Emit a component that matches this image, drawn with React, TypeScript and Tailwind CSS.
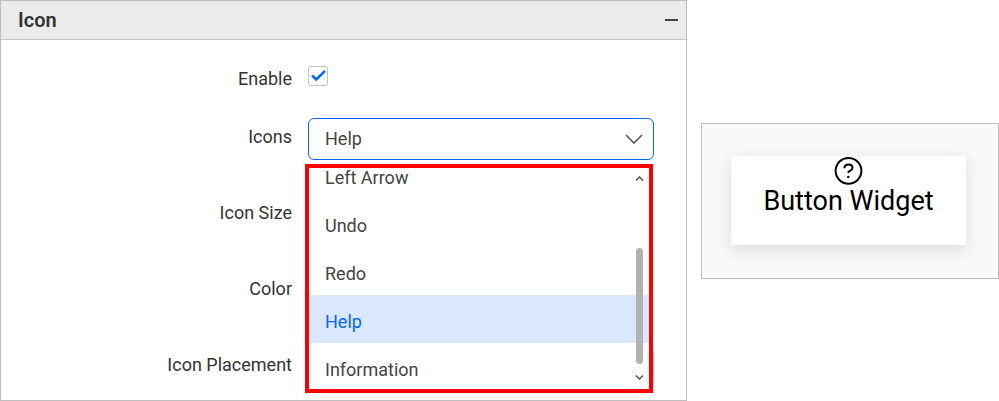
import React from "react";

const icons = ["Left Arrow", "Undo", "Redo", "Help", "Information"];

function Row({ label, id, children }: { label: string; id: string; children?: React.ReactNode }) {
  return (
    <div className="flex h-[42px] items-start gap-4">
      <label htmlFor={id} className="w-[291px] shrink-0 text-right leading-[38px]">
        {label}
      </label>
      <div className="relative min-w-0 flex-1">{children}</div>
    </div>
  );
}

function Chevron({ className, d }: { className: string; d: string }) {
  return (
    <svg viewBox="0 0 18 10" className={className} fill="none" stroke="currentColor" aria-hidden="true">
      <path d={d} />
    </svg>
  );
}

function IconMenu() {
  return (
    <div className="absolute -left-[3px] right-px top-[46px] z-10 h-[229px] overflow-hidden border-4 border-[#ff0000] bg-white">
      <ul role="listbox" aria-label="Icons" className="-mt-[17px] text-[#444444]">
        {icons.map((name) => (
          <li
            key={name}
            role="option"
            aria-selected={name === "Help"}
            className={
              name === "Help"
                ? "h-12 bg-[#dae8fe] px-4 leading-[54px] text-[#0565ff]"
                : "h-12 px-4 leading-[54px]"
            }
          >
            {name}
          </li>
        ))}
      </ul>
      <div className="absolute bottom-0 right-[5px] top-0 flex w-[9px] flex-col items-center justify-between pb-[9px] pt-2 text-[#555555]">
        <Chevron className="h-[5px] w-[9px] stroke-[3]" d="M2 9 9 2l7 7" />
        <div className="mb-[11px] mt-auto h-[116px] w-[7px] shrink-0 rounded-full bg-[#b2b2b2]" />
        <Chevron className="h-[5px] w-[9px] stroke-[3]" d="m2 1 7 7 7-7" />
      </div>
    </div>
  );
}

function IconPanel() {
  return (
    <section className="min-w-0 flex-1 border border-[#bebebe] bg-white pb-3 text-[18px] text-[#333333]">
      <header className="flex h-[39px] items-center justify-between border-b border-[#c4c4c4] bg-[#ebebeb] pl-[17px] pr-[7px]">
        <h2 className="text-[20px] font-semibold leading-6">Icon</h2>
        <button type="button" aria-label="Collapse" className="flex h-6 w-4 items-center justify-center">
          <span className="h-0.5 w-[13px] bg-[#444444]" />
        </button>
      </header>
      <form className="pr-8 pt-[26px]">
        <div className="mb-[26px] flex h-[26px] items-start gap-4">
          <label htmlFor="enable" className="w-[291px] text-right leading-[26px]">
            Enable
          </label>
          <span className="relative">
            <input
              id="enable"
              type="checkbox"
              defaultChecked
              className="peer block h-5 w-5 appearance-none rounded-[3px] border border-[#c4c4c4] bg-white"
            />
            <svg
              viewBox="0 0 20 20"
              className="pointer-events-none absolute inset-0 hidden h-5 w-5 peer-checked:block"
              fill="none"
              stroke="#0565ff"
              strokeWidth="2.6"
              aria-hidden="true"
            >
              <path d="m4 9.5 4.3 4 8.7-8.7" />
            </svg>
          </span>
        </div>
        <div className="flex flex-col gap-[34px]">
          <Row label="Icons" id="icons">
            <select
              id="icons"
              defaultValue="Help"
              className="block h-[42px] w-full appearance-none rounded-md border border-[#0565ff] bg-white px-4 pb-0.5 text-[#444444]"
            >
              {icons.map((name) => (
                <option key={name}>{name}</option>
              ))}
            </select>
            <Chevron
              className="pointer-events-none absolute right-[11px] top-4 h-[10px] w-[18px] stroke-[1.6] text-[#555555]"
              d="m1 1 8 8 8-8"
            />
            <IconMenu />
          </Row>
          <Row label="Icon Size" id="size">
            <input id="size" type="number" defaultValue={24} className="h-[38px] w-24" />
          </Row>
          <Row label="Color" id="color">
            <input id="color" type="color" className="h-[38px] w-12" />
          </Row>
          <Row label="Icon Placement" id="placement">
            <select id="placement" className="block h-[42px] w-full appearance-none rounded-md border border-[#c4c4c4] bg-white px-4">
              <option>Top</option>
            </select>
          </Row>
        </div>
      </form>
    </section>
  );
}

function Preview() {
  return (
    <section className="mt-[123px] w-[298px] shrink-0 border border-[#bebebe] bg-[#f9f9f9] px-[29px] pb-[33px] pt-8">
      <button
        type="button"
        className="flex h-[89px] w-[235px] flex-col items-center bg-white text-[27px] leading-[30px] text-black shadow-[0_5px_15px_rgba(60,70,80,0.16)]"
      >
        <svg viewBox="0 0 30 30" className="h-[30px] w-[30px] shrink-0" fill="none" stroke="currentColor" strokeWidth="2" aria-hidden="true">
          <circle cx="14.5" cy="14.8" r="12.9" />
          <path d="M10.4 12.2c0-2.3 1.7-3.7 4.1-3.7s4 1.3 4 3.3c0 2.7-3.3 3-4.6 4.9" />
          <circle cx="14.3" cy="20.9" r="1.2" fill="currentColor" stroke="none" />
        </svg>
        Button Widget
      </button>
    </section>
  );
}

export default function App() {
  return (
    <main className="flex items-start gap-3.5 bg-white font-['Roboto',sans-serif]">
      <IconPanel />
      <Preview />
    </main>
  );
}
